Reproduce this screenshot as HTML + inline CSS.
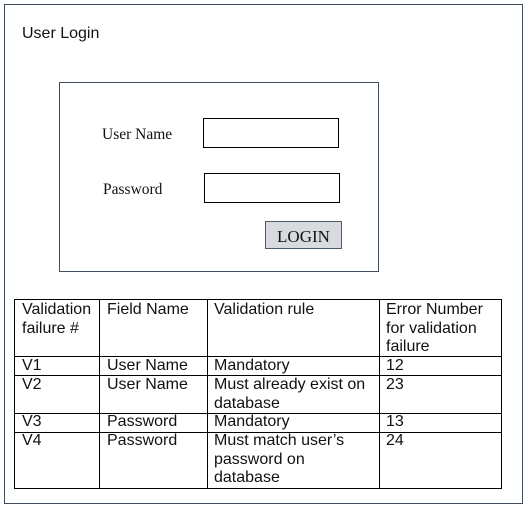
<!DOCTYPE html>
<html><head><style>
body{margin:0;width:529px;height:511px;background:#fff;position:relative;overflow:hidden;font-family:"Liberation Sans",Arial,sans-serif;}
.a{position:absolute;box-sizing:border-box;}
.s{font-family:"Liberation Serif","Times New Roman",serif;color:#111;font-size:15.5px;}
.c{position:absolute;font-size:16px;line-height:18.5px;color:#111;}
.h{position:absolute;background:#000;height:1px;}
.v{position:absolute;background:#000;width:1px;}
</style></head><body>
<div class="a" style="left:4px;top:4px;width:519px;height:500px;border:1px solid #3d4b5c;"></div>
<div class="a" style="left:22px;top:25px;font-size:16px;color:#111;">User Login</div>
<div class="a" style="left:59px;top:82px;width:320px;height:190px;border:1px solid #3d4b5c;"></div>
<div class="a s" style="left:102px;top:126px;">User Name</div>
<div class="a s" style="left:103px;top:181px;">Password</div>
<div class="a" style="left:203px;top:118px;width:136px;height:30px;border:1px solid #000;"></div>
<div class="a" style="left:204px;top:173px;width:136px;height:30px;border:1px solid #000;"></div>
<div class="a s" style="left:265px;top:221px;width:77px;height:28px;border:1px solid #4a5a70;background:#d7dadf;font-size:17px;text-align:center;line-height:29px;">LOGIN</div>

<div class="h" style="left:14px;top:299px;width:488px;"></div>
<div class="h" style="left:14px;top:356px;width:488px;"></div>
<div class="h" style="left:14px;top:375px;width:488px;"></div>
<div class="h" style="left:14px;top:413px;width:488px;"></div>
<div class="h" style="left:14px;top:432px;width:488px;"></div>
<div class="h" style="left:14px;top:488px;width:488px;"></div>
<div class="v" style="left:14px;top:299px;height:190px;"></div>
<div class="v" style="left:99px;top:299px;height:190px;"></div>
<div class="v" style="left:207px;top:299px;height:190px;"></div>
<div class="v" style="left:379px;top:299px;height:190px;"></div>
<div class="v" style="left:501px;top:299px;height:190px;"></div>

<div class="c" style="left:22px;top:301px;">Validation<br>failure #</div>
<div class="c" style="left:107px;top:301px;">Field Name</div>
<div class="c" style="left:214px;top:301px;">Validation rule</div>
<div class="c" style="left:386px;top:301px;">Error Number<br>for validation<br>failure</div>

<div class="c" style="left:22px;top:357px;">V1</div>
<div class="c" style="left:107px;top:357px;">User Name</div>
<div class="c" style="left:214px;top:357px;">Mandatory</div>
<div class="c" style="left:386px;top:357px;">12</div>

<div class="c" style="left:22px;top:376px;">V2</div>
<div class="c" style="left:107px;top:376px;">User Name</div>
<div class="c" style="left:214px;top:376px;">Must already exist on<br>database</div>
<div class="c" style="left:386px;top:376px;">23</div>

<div class="c" style="left:22px;top:413px;">V3</div>
<div class="c" style="left:107px;top:413px;">Password</div>
<div class="c" style="left:214px;top:413px;">Mandatory</div>
<div class="c" style="left:386px;top:413px;">13</div>

<div class="c" style="left:22px;top:432px;">V4</div>
<div class="c" style="left:107px;top:432px;">Password</div>
<div class="c" style="left:214px;top:432px;">Must match user’s<br>password on<br>database</div>
<div class="c" style="left:386px;top:432px;">24</div>
</body></html>
